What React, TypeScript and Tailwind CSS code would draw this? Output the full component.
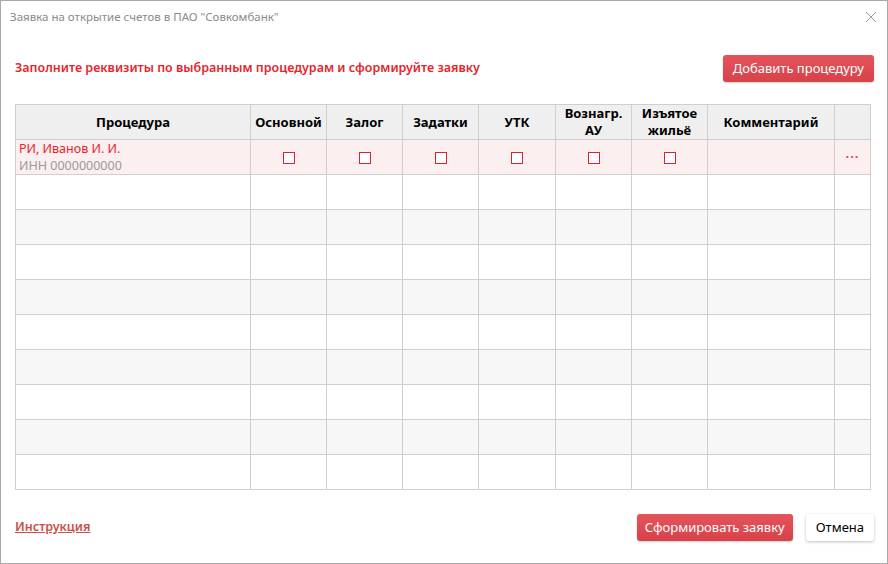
import React from "react";

const columns = [
  { key: "proc", label: "Процедура", width: "w-[235px]" },
  { key: "main", label: "Основной", width: "w-[76px]" },
  { key: "zalog", label: "Залог", width: "w-[76px]" },
  { key: "zadatki", label: "Задатки", width: "w-[76px]" },
  { key: "utk", label: "УТК", width: "w-[77px]" },
  { key: "voz", label: "Вознагр. АУ", width: "w-[76px]" },
  { key: "zhil", label: "Изъятое жильё", width: "w-[76px]" },
  { key: "comm", label: "Комментарий", width: "w-[127px]" },
  { key: "menu", label: "", width: "w-[36px]" },
];

const Checkbox = () => (
  <span className="inline-block h-[12px] w-[12px] border border-[#e0202a] bg-white align-middle" />
);

export default function App() {
  const emptyRows = Array.from({ length: 9 }, (_, i) => i);

  return (
    <div
      className="relative flex h-[564px] w-[888px] flex-col border border-[#a8a8a8] bg-white"
      style={{ fontFamily: '"Noto Sans", "Open Sans", sans-serif' }}
    >
      <div className="flex h-[32px] items-center justify-between pl-[9px] pr-[10px]">
        <span className="text-[11.5px] text-[#8a8a8a]">Заявка на открытие счетов в ПАО "Совкомбанк"</span>
        <svg width="12" height="12" viewBox="0 0 12 12" className="text-[#9a9a9a]">
          <path d="M1 1 L11 11 M11 1 L1 11" stroke="currentColor" strokeWidth="1" fill="none" />
        </svg>
      </div>

      <div className="mt-[22px] flex items-center justify-between pl-[14px] pr-[13px]">
        <span className="text-[12.5px] font-semibold text-[#e4262d]">
          Заполните реквизиты по выбранным процедурам и сформируйте заявку
        </span>
        <button
          type="button"
          className="h-[27px] rounded-[3px] bg-gradient-to-b from-[#e4545b] to-[#d8414a] px-[10px] text-[13px] text-white shadow-[0_1px_2px_rgba(0,0,0,0.2)]"
        >
          Добавить процедуру
        </button>
      </div>

      <div className="mt-[22px] pl-[14px]">
        <table className="w-[856px] table-fixed border-collapse text-[13px]">
          <thead>
            <tr className="h-[35px] bg-[#efefef]">
              {columns.map((c) => (
                <th
                  key={c.key}
                  className={`${c.width} border border-[#cfcfcf] px-1 text-center text-[13px] font-bold leading-[17px] text-black`}
                >
                  {c.key === "voz" ? (
                    <>
                      Вознагр.
                      <br />
                      АУ
                    </>
                  ) : c.key === "zhil" ? (
                    <>
                      Изъятое
                      <br />
                      жильё
                    </>
                  ) : (
                    c.label
                  )}
                </th>
              ))}
            </tr>
          </thead>
          <tbody>
            <tr className="h-[35px] bg-[#fcefef]">
              <td className="border border-[#cfcfcf] px-[3px] align-middle leading-[17px]">
                <div className="text-[12.5px] text-[#e4262d]">РИ, Иванов И. И.</div>
                <div className="text-[12.5px] text-[#999]">ИНН 0000000000</div>
              </td>
              {["main", "zalog", "zadatki", "utk", "voz", "zhil"].map((k) => (
                <td key={k} className="border border-[#cfcfcf] text-center">
                  <Checkbox />
                </td>
              ))}
              <td className="border border-[#cfcfcf]" />
              <td className="border border-[#cfcfcf] text-center">
                <span className="text-[13px] font-bold tracking-[1px] text-[#d94c54]">···</span>
              </td>
            </tr>
            {emptyRows.map((i) => (
              <tr key={i} className={`h-[35px] ${i % 2 === 0 ? "bg-white" : "bg-[#f7f7f7]"}`}>
                {columns.map((c) => (
                  <td key={c.key} className="border border-[#cfcfcf]" />
                ))}
              </tr>
            ))}
          </tbody>
        </table>
      </div>

      <div className="mt-auto mb-[22px] flex items-center justify-between pl-[14px] pr-[13px]">
        <a href="#" className="text-[12.5px] font-semibold text-[#c95049] underline">
          Инструкция
        </a>
        <div className="flex items-center gap-[13px]">
          <button
            type="button"
            className="h-[27px] rounded-[3px] bg-gradient-to-b from-[#e4545b] to-[#d8414a] px-[8px] text-[13px] text-white shadow-[0_1px_2px_rgba(0,0,0,0.2)]"
          >
            Сформировать заявку
          </button>
          <button
            type="button"
            className="h-[27px] rounded-[3px] bg-white px-[10px] text-[13px] text-black shadow-[0_1px_3px_rgba(0,0,0,0.25)]"
          >
            Отмена
          </button>
        </div>
      </div>
    </div>
  );
}
